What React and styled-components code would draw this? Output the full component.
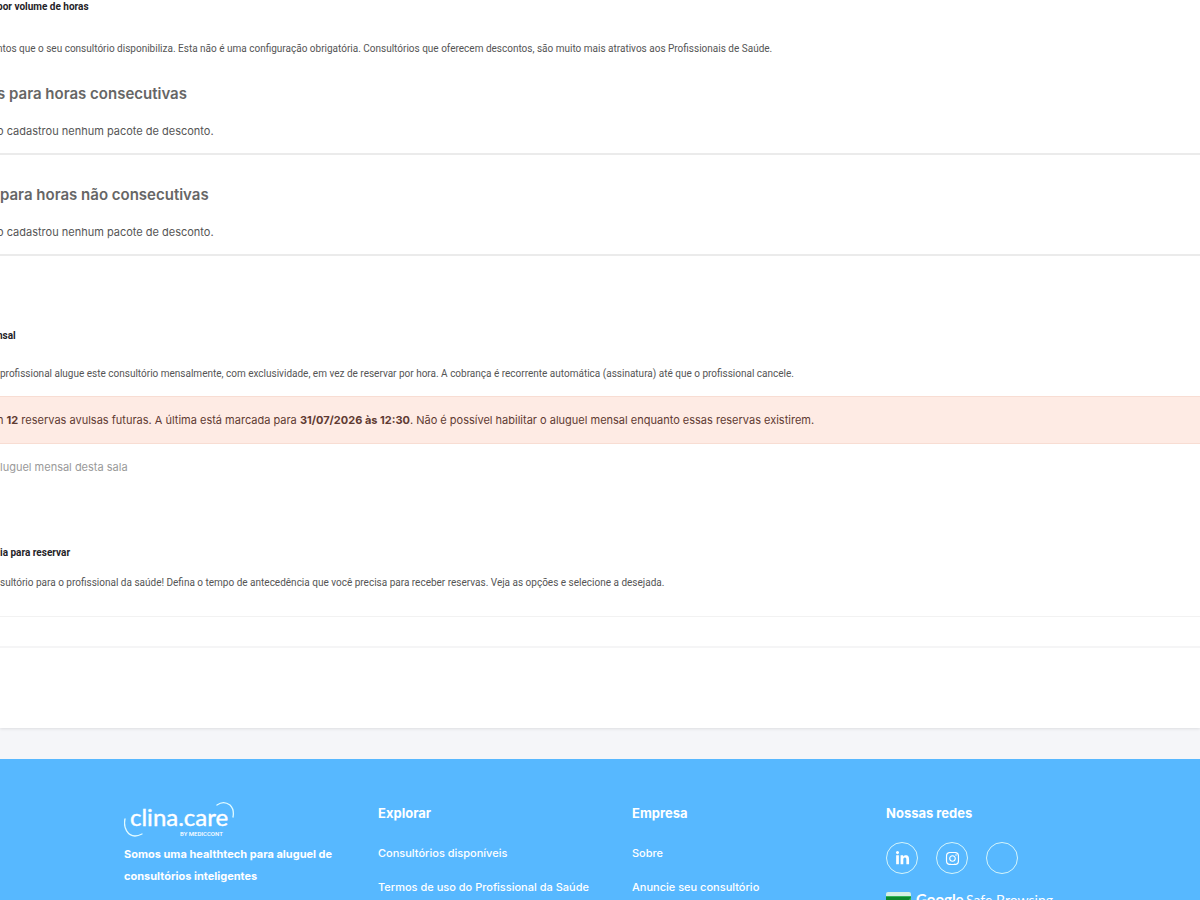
import React from "react";
import styled, { createGlobalStyle } from "styled-components";
import { FaInstagram, FaLinkedinIn } from "react-icons/fa";

const exploreLinks = ["Consultórios disponíveis", "Termos de uso do Profissional da Saúde"];
const companyLinks = ["Sobre", "Anuncie seu consultório"];

const SafeBrowsing = () => (
  <svg width="168" height="28" viewBox="0 0 168 28" role="img" aria-label="Google Safe Browsing">
    <path d="M0 2a2 2 0 0 1 2-2h21a2 2 0 0 1 2 2v2H0z" fill="#d5f0e6" />
    <path d="M0 4h25v15H0z" fill="#35b558" />
    <path d="M0 5h25l-10 14H0z" fill="#0c8a2f" />
    <text x="30" y="13" fontSize="15" fontWeight="700">Google</text>
    <text x="80" y="13" fontSize="14">Safe Browsing</text>
  </svg>
);

const Logo = () => (
  <svg width="112" height="36" viewBox="0 0 112 36" role="img" aria-label="clina.care by Mediccont">
    <g fill="none" stroke="#e2fbff" strokeWidth="1.3" strokeLinecap="round">
      <path d="M1 18C-1 27 4 35 11 35c3 0 5-1 7-2" />
      <path d="M93 4c4-3 9-3 13 0 3 3 4 7 3 12" />
    </g>
    <text x="6" y="25" fontSize="24" stroke="#fff" strokeWidth="0.4">clina.care</text>
    <Byline x="56" y="35">BY MEDICCONT</Byline>
  </svg>
);

const LinkColumn = ({ title, links }) => (
  <Column>
    <FooterTitle>{title}</FooterTitle>
    <LinkList>
      {links.map((link) => (
        <li key={link}>
          <FooterLink href="#">{link}</FooterLink>
        </li>
      ))}
    </LinkList>
  </Column>
);

const App = () => {
  return (
    <>
      <GlobalStyle />
      <Page>
        <Card>
          <Section>
            <Lines>
              <Label>por volume de horas</Label>
              <Description $top={28}>
                ntos que o seu consultório disponibiliza. Esta não é uma configuração obrigatória. Consultórios que
                oferecem descontos, são muito mais atrativos aos Profissionais de Saúde.
              </Description>
              <Title>s para horas consecutivas</Title>
              <Empty>o cadastrou nenhum pacote de desconto.</Empty>
            </Lines>
          </Section>
          <Section>
            <Title>para horas não consecutivas</Title>
            <Lines>
              <Empty>o cadastrou nenhum pacote de desconto.</Empty>
            </Lines>
          </Section>
          <Monthly>
            <Lines>
              <Label>nsal</Label>
            </Lines>
            <Description $top={24}>
              profissional alugue este consultório mensalmente, com exclusividade, em vez de reservar por hora. A
              cobrança é recorrente automática (assinatura) até que o profissional cancele.
            </Description>
            <Alert role="alert">
              <Lines>
                n <strong>12</strong> reservas avulsas futuras. A última está marcada para{" "}
                <strong>31/07/2026 às 12:30</strong>. Não é possível habilitar o aluguel mensal enquanto essas reservas
                existirem.
              </Lines>
            </Alert>
            <Disabled>luguel mensal desta sala</Disabled>
          </Monthly>
          <Advance>
            <Label>ia para reservar</Label>
            <Description $top={16}>
              sultório para o profissional da saúde! Defina o tempo de antecedência que você precisa para receber
              reservas. Veja as opções e selecione a desejada.
            </Description>
          </Advance>
          <CardFooter />
        </Card>
        <Footer>
          <Column>
            <Logo />
            <Tagline>Somos uma healthtech para aluguel de consultórios inteligentes</Tagline>
          </Column>
          <LinkColumn title="Explorar" links={exploreLinks} />
          <LinkColumn title="Empresa" links={companyLinks} />
          <Column>
            <FooterTitle>Nossas redes</FooterTitle>
            <Socials>
              <Social href="#" aria-label="LinkedIn"><FaLinkedinIn size={15} /></Social>
              <Social href="#" aria-label="Instagram"><FaInstagram size={15} /></Social>
              <Social href="#" aria-label="Rede social" />
            </Socials>
            <SafeBrowsing />
          </Column>
        </Footer>
      </Page>
    </>
  );
};

const GlobalStyle = createGlobalStyle`
  * {
    box-sizing: border-box;
  }
  body {
    margin: 0;
    background: #f5f6f9;
    font-family: Inter, sans-serif;
    overflow-x: hidden;
  }
  h2, h3, p, ul {
    margin: 0;
    padding: 0;
  }
`;

const Page = styled.div`
  overflow: hidden;
`;

const Card = styled.main`
  padding-top: 1px;
  background: #fff;
  box-shadow: 0 1px 3px rgba(0, 0, 0, 0.1);
  margin-bottom: 31px;
  white-space: nowrap;
`;

const Lines = styled.div`
  margin-left: -3px;
`;

const Section = styled.section`
  border-bottom: 2px solid #ebebeb;
  padding-bottom: 14px;
  & + & {
    padding-top: 3px;
  }
`;

const Label = styled.h3`
  font-family: Roboto, sans-serif;
  font-size: 10px;
  line-height: 12px;
  font-weight: 700;
  color: #1f2328;
`;

const Description = styled.p`
  margin-top: ${({ $top }) => $top}px;
  font-family: Roboto, sans-serif;
  font-size: 10px;
  line-height: 16px;
  color: #555;
`;

const Title = styled.h2`
  margin-top: 25px;
  font-size: 15px;
  line-height: 24px;
  font-weight: 600;
  color: #666;
`;

const Empty = styled.p`
  margin-top: 17px;
  font-size: 11px;
  line-height: 16px;
  color: #555;
`;

const Monthly = styled.section`
  padding-top: 74px;
`;

const Alert = styled.div`
  margin-top: 14px;
  padding: 15px 0;
  border: 1px solid #f8ddd3;
  border-width: 1px 0;
  background: #feebe4;
  font-size: 11px;
  line-height: 16px;
  color: #5f3a32;
  strong {
    font-weight: 700;
  }
`;

const Disabled = styled.p`
  margin-top: 15px;
  font-size: 11px;
  line-height: 16px;
  color: #999;
`;

const Advance = styled.section`
  padding-top: 72px;
  padding-bottom: 25px;
`;

const CardFooter = styled.div`
  height: 112px;
  border-top: 1px solid #f2f2f2;
  &::before {
    content: "";
    display: block;
    height: 29px;
    border-bottom: 2px solid #f5f5f6;
  }
`;

const Footer = styled.footer`
  display: grid;
  grid-template-columns: repeat(4, 1fr);
  padding: 42px 60px 0 124px;
  background: #57b8ff;
  color: #fff;
  svg text {
    fill: #fff;
    font-family: Lato, sans-serif;
  }
`;

const Byline = styled.text`
  && {
    font-family: Roboto, sans-serif;
    font-size: 6px;
    font-weight: 500;
  }
`;

const Column = styled.div`
  display: flex;
  flex-direction: column;
  align-items: flex-start;
`;

const Tagline = styled.p`
  margin-top: 6px;
  font-size: 11px;
  line-height: 22px;
  font-weight: 700;
`;

const FooterTitle = styled.h3`
  font-size: 13px;
  line-height: 24px;
  font-weight: 700;
`;

const LinkList = styled.ul`
  display: flex;
  flex-direction: column;
  gap: 14px;
  margin-top: 18px;
  list-style: none;
  font-size: 11px;
  line-height: 20px;
  font-weight: 500;
`;

const FooterLink = styled.a`
  color: inherit;
  text-decoration: none;
`;

const Socials = styled.div`
  display: flex;
  gap: 18px;
  margin: 17px 0 18px;
`;

const Social = styled.a`
  display: flex;
  align-items: center;
  justify-content: center;
  width: 32px;
  height: 32px;
  border: 1px solid #d5f5fa;
  border-radius: 50%;
  color: #fff;
`;

export default App;
